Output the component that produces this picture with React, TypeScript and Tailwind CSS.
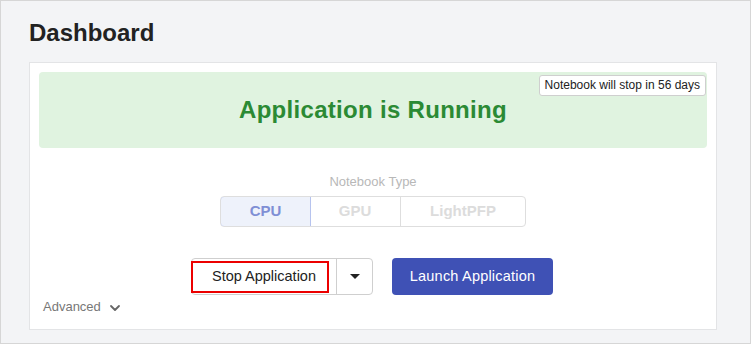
import React from 'react';

const font = { fontFamily: '"Liberation Sans", Arial, sans-serif' };

const types = ['CPU', 'GPU', 'LightPFP'];

export default function App() {
  return (
    <div style={font} className="w-[751px] h-[344px] border border-[#d6d6d6] bg-[#f3f4f6] pl-[28px] pr-[33px]">
      <h1 className="pt-[17px] h-[61px] text-[24px] leading-[30px] font-bold text-[#222]">Dashboard</h1>

      <div className="bg-white border border-[#e3e4e6] h-[268px] px-[9px] pt-[9px]">
        {/* status banner */}
        <div className="relative h-[76px] rounded-[4px] bg-[#e0f3e0] flex items-center justify-center">
          <h2 className="text-[24px] font-bold text-[#2b8a34] tracking-[0.3px]">Application is Running</h2>
          <div className="absolute top-[3px] right-[1px] h-[21px] px-[5px] bg-white border border-[#cfcfcf] rounded-[3px] text-[12px] leading-[19px] text-[#222]">
            Notebook will stop in 56 days
          </div>
        </div>

        {/* notebook type */}
        <div className="flex flex-col items-center mt-[26px]">
          <div className="text-[13px] leading-[15px] text-[#b8b8b8]">Notebook Type</div>
          <div className="flex mt-[7px] h-[31px] rounded-[4px] border border-[#dedede] overflow-hidden">
            {types.map((t, i) => (
              <div
                key={t}
                className={
                  i === 0
                    ? 'w-[91px] flex items-center justify-center text-[15px] font-bold bg-[#eef2fb] text-[#7f8fd5] border border-[#b6c3ee] -m-px rounded-l-[4px]'
                    : i === 1
                    ? 'w-[91px] flex items-center justify-center text-[15px] font-bold text-[#dcdcdc] border-r border-[#dedede]'
                    : 'w-[124px] flex items-center justify-center text-[15px] font-bold text-[#dcdcdc]'
                }
              >
                {t}
              </div>
            ))}
          </div>
        </div>

        {/* actions */}
        <div className="flex justify-center gap-[19px] mt-[31px] pr-[2px]">
          <div className="relative flex h-[37px] rounded-[4px] border border-[#cfcfcf]">
            <button className="w-[145px] text-[14.5px] text-[#222] border-r border-[#cfcfcf]">Stop Application</button>
            <button className="w-[35px] flex items-center justify-center">
              <span className="block w-0 h-0 border-l-[5px] border-r-[5px] border-t-[5px] border-l-transparent border-r-transparent border-t-[#222]" />
            </button>
            <div className="absolute -left-px top-[2px] w-[138px] h-[32px] border-2 border-[#ec0000] pointer-events-none" />
          </div>
          <button className="w-[161px] h-[37px] rounded-[4px] bg-[#3f51b5] text-white text-[14.5px] tracking-[0.2px]">Launch Application</button>
        </div>

        <div className="flex items-center mt-[4px] ml-[4px] text-[13px] leading-[16px] text-[#777]">
          Advanced
          <svg className="ml-[8px] mt-[2px]" width="12" height="12" viewBox="0 0 12 12" fill="none" stroke="#666" strokeWidth="1.8" strokeLinecap="round" strokeLinejoin="round">
            <path d="M2 4l4 4 4-4" />
          </svg>
        </div>
      </div>
    </div>
  );
}
